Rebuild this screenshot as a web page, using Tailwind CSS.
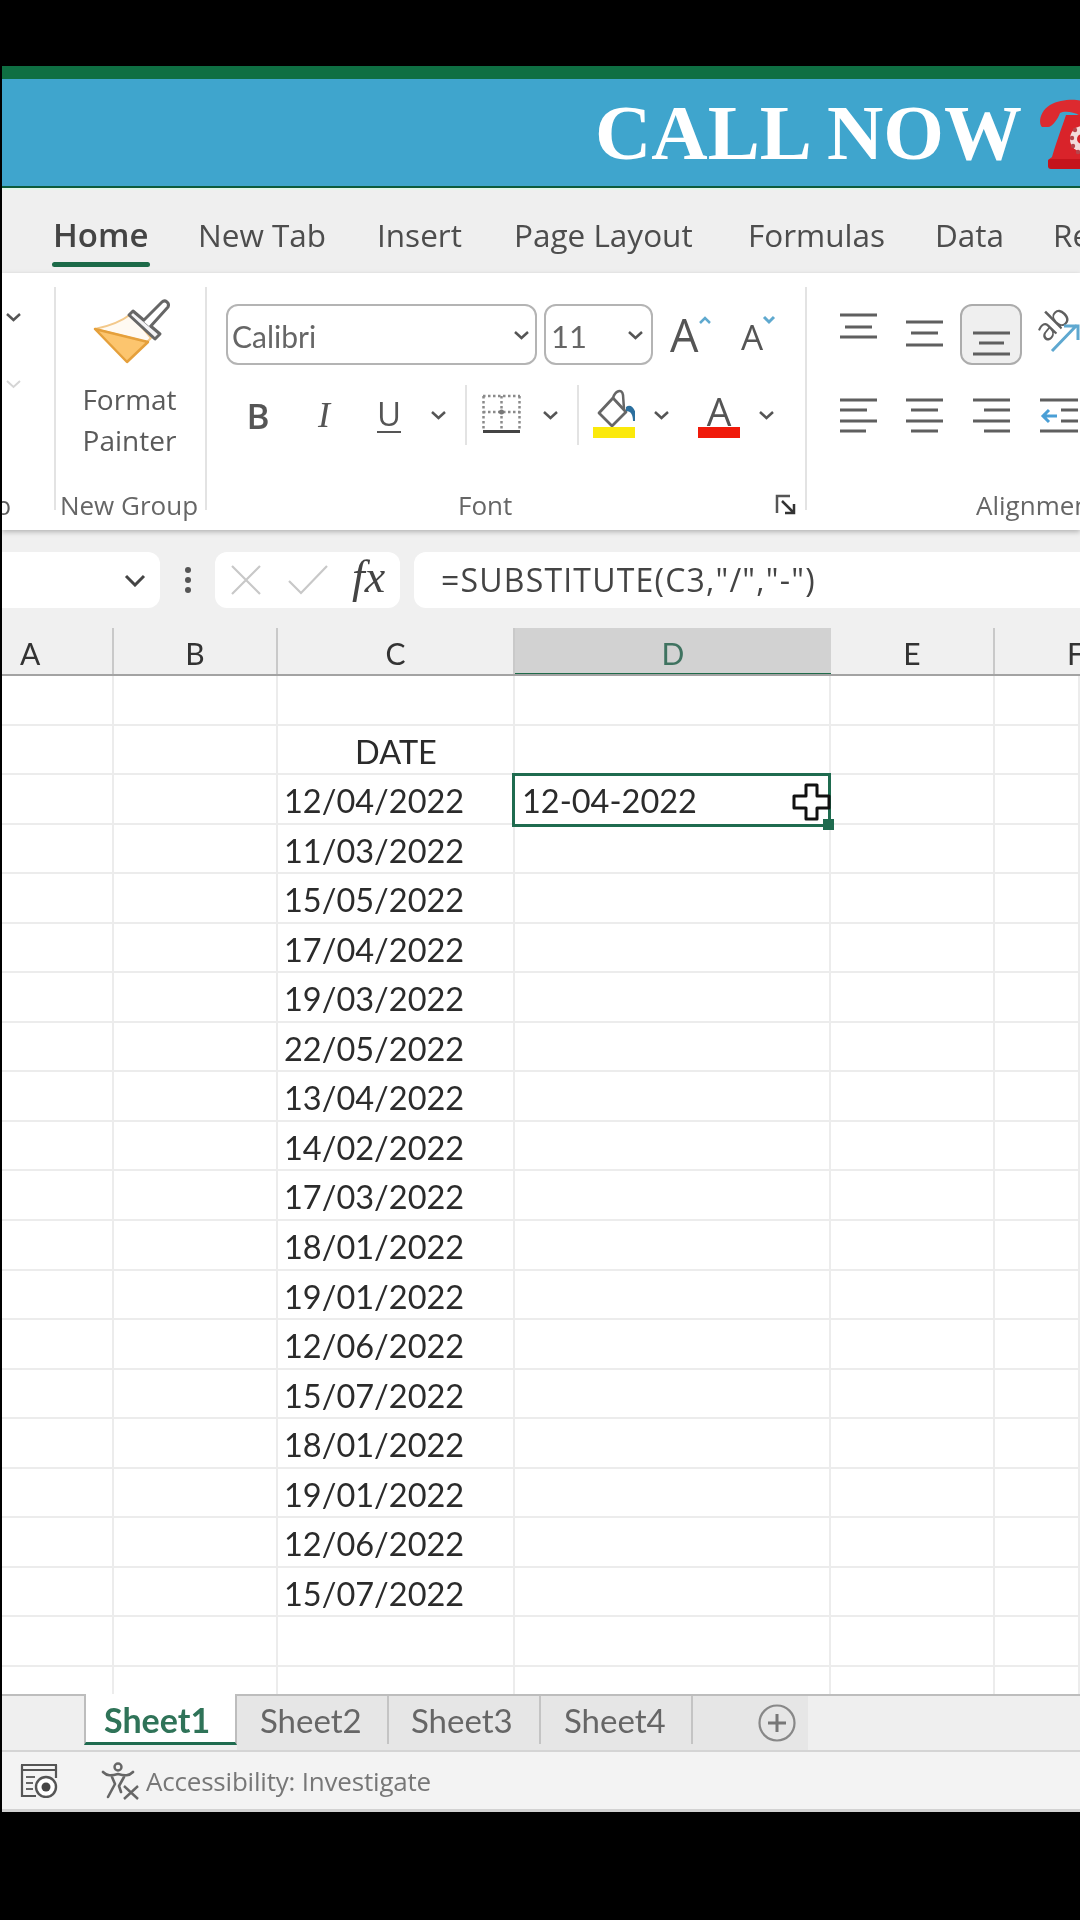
<!DOCTYPE html>
<html><head><meta charset="utf-8"><script src="https://cdn.jsdelivr.net/npm/@tailwindcss/browser@4"></script></head>
<body class="bg-black">
<div class="w-[1080px] h-[1920px] bg-black overflow-hidden pt-[66px] pl-[2px] blur-[0.6px] font-['Open_Sans',sans-serif]">
<div class="w-[1078px] flex flex-col overflow-hidden">

<!-- title strip + banner -->
<div class="h-[13px] bg-[#0f6f43]"></div>
<div class="h-[109px] bg-[#3fa5cd] border-b-2 border-[#0c5c3c] flex items-center pl-[593px] overflow-hidden">
  <span class="font-['Liberation_Serif',serif] font-bold text-[78px] leading-none text-white whitespace-nowrap w-[425px] shrink-0">CALL NOW</span>
  <svg class="shrink-0 -mt-[1px]" width="60" height="90" viewBox="0 0 60 90"><path d="M22 40C18 36 20 24 30 18C40 12 56 12 62 14V30C54 24 44 24 40 26C38 32 32 40 28 40Z" fill="#dd2a2f"/><path d="M46 28C42 40 36 56 32 70L28 73C28 78 29 81 32 82H64V28Z" fill="#d9232a"/><rect x="28" y="72" width="36" height="10" rx="3" fill="#c5141c"/><circle cx="63" cy="52" r="13" fill="#f3dcdc"/><circle cx="62" cy="52" r="5" fill="#d9232a"/><g fill="#b5454c"><circle cx="55" cy="43" r="2.2"/><circle cx="52" cy="51" r="2.2"/><circle cx="53" cy="59" r="2.2"/><circle cx="58" cy="65" r="2.2"/></g></svg>
</div>

<!-- ribbon tabs -->
<div class="h-[85px] bg-[#efefef] border-t-2 border-[#e4f6ec] flex text-[#4d4d4d] text-[31.5px] leading-none pl-[51px] pt-[29px] whitespace-nowrap">
  <div class="w-[145px] shrink-0 relative"><span class="font-semibold text-[33px] text-[#444] -mt-[1px] block">Home</span><div class="absolute left-[-1px] top-[43px] w-[98px] h-[5px] rounded-sm bg-[#1c6a48]"></div></div>
  <div class="w-[179px] shrink-0">New Tab</div>
  <div class="w-[137px] shrink-0">Insert</div>
  <div class="w-[234px] shrink-0">Page Layout</div>
  <div class="w-[187px] shrink-0">Formulas</div>
  <div class="w-[118px] shrink-0">Data</div>
  <div class="shrink-0">Review</div>
</div>

<!-- ribbon -->
<div class="h-[257px] bg-white pt-[14px] flex relative z-10 shadow-[0_2px_5px_rgba(0,0,0,0.25)] text-[#5c5c5c]">
  <!-- clipped group -->
  <div class="w-[52px] shrink-0 h-[223px] flex flex-col pl-[3px] overflow-visible">
    <svg class="mt-[25px]" width="17" height="10" viewBox="0 0 17 10"><path d="M2 2L8.5 8L15 2" fill="none" stroke="#555" stroke-width="2.5"/></svg>
    <svg class="mt-[57px]" width="17" height="10" viewBox="0 0 17 10"><path d="M2 2L8.5 8L15 2" fill="none" stroke="#d5d5d5" stroke-width="2"/></svg>
    <div class="mt-auto -mb-[10px] -ml-[9px] text-[25px] leading-[30px] h-[30px]">o</div>
  </div>
  <!-- format painter group -->
  <div class="w-[151px] shrink-0 h-[223px] border-l-2 border-[#e3e3e3] flex flex-col items-center">
    <svg class="ml-[8px] mt-[3px] shrink-0" width="110" height="90" viewBox="0 0 110 90"><path d="M15 39C30 36 42 31 51 24L71 48L67 52Z" fill="#fffaf2" stroke="#f3c98b" stroke-width="2" stroke-linejoin="round"/><path d="M15 39L68 52L47 72Z" fill="#fcc56e" stroke="#e5a03b" stroke-width="2.5" stroke-linejoin="round"/><path d="M49 25L53 21L80 44L75 49Z" fill="#f4f4f6" stroke="#666" stroke-width="3" stroke-linejoin="round"/><path d="M63 31L82 12C85 9 90 13 88 17L70 37" fill="#fff" stroke="#666" stroke-width="3" stroke-linejoin="round"/></svg>
    <div class="text-[28px] leading-[41px] text-center -mt-[1px] -ml-[2px] text-[#5a5a5a]">Format<br>Painter</div>
    <div class="mt-auto -mb-[10px] text-[26px] leading-[30px] h-[30px] whitespace-nowrap text-[#666] -ml-[3px]">New Group</div>
  </div>
  <!-- font group -->
  <div class="w-[600px] shrink-0 h-[223px] border-l-2 border-[#e3e3e3] flex flex-col">
    <div class="flex mt-[17px] ml-[19px] h-[61px] shrink-0">
      <div class="w-[311px] rounded-xl border-2 border-[#b4b4b4] flex items-center justify-between pl-[4px] pr-[5px] font-['Lato',sans-serif] text-[30px] text-[#666]"><span class="pt-[3px]">Calibri</span><svg width="17" height="10" viewBox="0 0 17 10"><path d="M2 2L8.5 8L15 2" fill="none" stroke="#555" stroke-width="2.5"/></svg></div>
      <div class="w-[109px] ml-[7px] rounded-xl border-2 border-[#b4b4b4] flex items-center justify-between pl-[5px] pr-[7px] font-['Lato',sans-serif] text-[31px] text-[#666]"><span class="pt-[3px]">11</span><svg width="17" height="10" viewBox="0 0 17 10"><path d="M2 2L8.5 8L15 2" fill="none" stroke="#555" stroke-width="2.5"/></svg></div>
      <div class="ml-[17px] w-[40px] flex h-[61px] relative shrink-0"><span class="text-[45px] leading-[61px] text-[#555]">A</span><svg class="absolute left-[28px] top-[11px]" width="14" height="10" viewBox="0 0 14 10"><path d="M2 8L7 3L12 8" fill="none" stroke="#5fa9cf" stroke-width="2.5"/></svg></div>
      <div class="ml-[31px] w-[40px] flex h-[61px] relative shrink-0"><span class="text-[35px] leading-[66px] text-[#555]">A</span><svg class="absolute left-[21px] top-[11px]" width="14" height="10" viewBox="0 0 14 10"><path d="M2 2L7 7L12 2" fill="none" stroke="#5fa9cf" stroke-width="3"/></svg></div>
    </div>
    <div class="flex mt-[20px] ml-[31px] h-[60px] items-center shrink-0">
      <div class="w-[40px] text-center font-semibold text-[35px] leading-none text-[#555]">B</div>
      <div class="w-[40px] ml-[26px] text-center font-['Liberation_Serif',serif] italic text-[36px] leading-none text-[#555]">I</div>
      <div class="w-[40px] ml-[25px] flex flex-col items-center text-[33px] leading-none text-[#555]"><span>U</span><span class="w-[24px] h-[2px] bg-[#555] mt-[1px]"></span></div>
      <svg class="ml-[21px]" width="17" height="10" viewBox="0 0 17 10"><path d="M2 2L8.5 8L15 2" fill="none" stroke="#555" stroke-width="2.5"/></svg>
      <div class="w-[2px] h-[60px] bg-[#e3e3e3] ml-[18px]"></div>
      <svg class="ml-[15px]" width="39" height="44" viewBox="0 0 39 44"><g fill="none" stroke="#8a8a8a" stroke-width="2.5" stroke-dasharray="2.5 2.5"><path d="M1 3H38"/><path d="M1.5 3V36"/><path d="M37.5 3V36"/><path d="M19.5 3V36"/><path d="M1 19H38"/></g><circle cx="19.5" cy="19" r="2.5" fill="#777"/><path d="M1 38.5H38" stroke="#444" stroke-width="3"/></svg>
      <svg class="ml-[21px]" width="17" height="10" viewBox="0 0 17 10"><path d="M2 2L8.5 8L15 2" fill="none" stroke="#555" stroke-width="2.5"/></svg>
      <div class="w-[2px] h-[60px] bg-[#e3e3e3] ml-[18px]"></div>
      <svg class="ml-[14px]" width="42" height="60" viewBox="0 0 42 60"><path d="M6 28L20 13L33 27L19 41Z" fill="#fff" stroke="#666" stroke-width="2.8" stroke-linejoin="round"/><path d="M20 13C22 6 29 3 30 10L31 24" fill="none" stroke="#666" stroke-width="2.5"/><path d="M33 22C38 18 44 24 43 36L40 36C40 30 38 26 33 26Z" fill="#2b6f9e"/><rect x="0" y="42" width="42" height="11" fill="#fbe90b"/></svg>
      <svg class="ml-[18px]" width="17" height="10" viewBox="0 0 17 10"><path d="M2 2L8.5 8L15 2" fill="none" stroke="#555" stroke-width="2.5"/></svg>
      <div class="ml-[28px] w-[42px] flex flex-col items-center shrink-0 h-[60px]"><span class="mt-[12px] h-[28px] text-[39px] leading-[28px] text-[#555]">A</span><span class="mt-[2px] w-[42px] h-[11px] bg-[#f01a0a] shrink-0"></span></div>
      <svg class="ml-[18px]" width="17" height="10" viewBox="0 0 17 10"><path d="M2 2L8.5 8L15 2" fill="none" stroke="#555" stroke-width="2.5"/></svg>
    </div>
    <div class="mt-auto -mb-[10px] h-[30px] flex text-[26px] leading-[30px] text-[#666] pl-[251px] shrink-0">Font<svg class="ml-auto mr-[8px] mt-[4px]" width="22" height="22" viewBox="0 0 22 22"><path d="M15 2H2V19" fill="none" stroke="#555" stroke-width="2.5"/><path d="M7 7L18 18M19 10V19H10" fill="none" stroke="#333" stroke-width="2.5"/></svg></div>
  </div>
  <!-- alignment group -->
  <div class="flex-1 h-[223px] border-l-2 border-[#e3e3e3] flex flex-col pl-[33px] overflow-visible">
    <div class="flex mt-[17px] h-[61px] shrink-0">
      <svg width="37" height="61" viewBox="0 0 37 61"><path d="M0 11H37M5 23H32M0 33H37" stroke="#5f5f5f" stroke-width="3"/></svg>
      <svg class="ml-[29px]" width="37" height="61" viewBox="0 0 37 61"><path d="M0 18H37M5 29H32M0 41H37" stroke="#5f5f5f" stroke-width="3"/></svg>
      <div class="ml-[17px] w-[62px] h-[61px] rounded-xl border-2 border-[#acacac] bg-[#efefef] shrink-0"><svg class="ml-[11px]" width="37" height="57" viewBox="0 0 37 57"><path d="M0 27H37M6 37H31M0 48H37" stroke="#5f5f5f" stroke-width="3"/></svg></div>
      <div class="ml-[15px] w-[50px] h-[61px] relative shrink-0 overflow-hidden"><span class="absolute left-[-4px] top-[3px] -rotate-45 text-[31px] leading-[30px] text-[#5f5f5f]">ab</span><svg class="absolute left-0 top-0" width="50" height="61" viewBox="0 0 50 61"><path d="M15 47L40 21M27 22H41V36" fill="none" stroke="#5ea8d0" stroke-width="3"/></svg></div>
    </div>
    <div class="flex mt-[20px] h-[60px] shrink-0">
      <svg width="37" height="60" viewBox="0 0 37 60"><path d="M0 15H37M0 25H27M0 36H37M0 46H26" stroke="#5f5f5f" stroke-width="3"/></svg>
      <svg class="ml-[29px]" width="37" height="60" viewBox="0 0 37 60"><path d="M0 15H37M5 25H32M0 36H37M5 46H32" stroke="#5f5f5f" stroke-width="3"/></svg>
      <svg class="ml-[30px]" width="37" height="60" viewBox="0 0 37 60"><path d="M0 15H37M11 25H37M0 36H37M11 46H37" stroke="#5f5f5f" stroke-width="3"/></svg>
      <svg class="ml-[30px]" width="38" height="60" viewBox="0 0 38 60"><path d="M0 15H38M0 46H38M21 25H38M21 36H38" stroke="#5f5f5f" stroke-width="3"/><path d="M17 31H3M9 25L3 31L9 37" fill="none" stroke="#4a9fd6" stroke-width="3"/></svg>
    </div>
    <div class="mt-auto -mb-[10px] h-[30px] text-[26px] leading-[30px] text-[#666] pl-[136px] whitespace-nowrap shrink-0">Alignment</div>
  </div>
</div>

<!-- formula bar -->
<div class="h-[98px] bg-[#f0f0f0] pt-[22px] flex shrink-0">
  <div class="w-[158px] h-[56px] bg-white rounded-r-xl flex items-center justify-end pr-[14px]"><svg width="22" height="13" viewBox="0 0 22 13"><path d="M2 2L11 11L20 2" fill="none" stroke="#444" stroke-width="3"/></svg></div>
  <div class="w-[55px] h-[56px] flex flex-col items-center justify-center gap-[4px]"><span class="w-[6px] h-[6px] rounded-full bg-[#555]"></span><span class="w-[6px] h-[6px] rounded-full bg-[#555]"></span><span class="w-[6px] h-[6px] rounded-full bg-[#555]"></span></div>
  <div class="w-[185px] h-[56px] bg-white rounded-xl flex items-center pl-[15px]">
    <svg width="32" height="32" viewBox="0 0 32 32"><path d="M2 2L30 30M30 2L2 30" stroke="#c8c8c8" stroke-width="2.2"/></svg>
    <svg class="ml-[25px]" width="42" height="32" viewBox="0 0 42 32"><path d="M2 17L14 29L40 2" fill="none" stroke="#c8c8c8" stroke-width="2.2"/></svg>
    <span class="ml-[23px] font-['Liberation_Serif',serif] italic text-[46px] leading-none text-[#444] -mt-[6px]">fx</span>
  </div>
  <div class="flex-1 ml-[14px] h-[56px] bg-white rounded-l-xl flex items-center pl-[27px] text-[32px] tracking-[1.2px] text-[#444] whitespace-nowrap">=SUBSTITUTE(C3,"/","-")</div>
</div>

<!-- column headers -->
<div class="h-[48px] bg-[#f0f0f0] grid grid-cols-[112px_164px_237px_316px_164px_85px] border-b-2 border-[#a3a3a3] font-['Lato',sans-serif] text-[30px] text-[#333] leading-[50px] overflow-hidden">
  <div class="border-r-2 border-[#c9c9c9] pl-[18px]">A</div>
  <div class="border-r-2 border-[#c9c9c9] text-center">B</div>
  <div class="border-r-2 border-[#c9c9c9] text-center">C</div>
  <div class="bg-[#d2d2d2] text-center text-[#3f7360] border-b-[3px] border-[#1f6b4a] h-[48px] relative z-10">D</div>
  <div class="border-r-2 border-[#c9c9c9] text-center">E</div>
  <div class="pl-[72px]">F</div>
</div>

<!-- grid -->
<div class="h-[1018px] bg-white overflow-hidden font-['Lato',sans-serif] text-[32.5px] text-[#2b2b2b] leading-[52px]">
  <div class="grid grid-cols-[112px_164px_237px_316px_164px_85px] h-[49.55px] border-b-2 border-[#ececec] *:border-r-2 *:border-[#ececec] *:pl-[6px]"><div></div><div></div><div></div><div></div><div></div><div></div></div>
  <div class="grid grid-cols-[112px_164px_237px_316px_164px_85px] h-[49.55px] border-b-2 border-[#ececec] *:border-r-2 *:border-[#ececec] *:pl-[6px]"><div></div><div></div><div class="text-center pr-[5px]">DATE</div><div></div><div></div><div></div></div>
  <div class="grid grid-cols-[112px_164px_237px_316px_164px_85px] h-[49.55px] border-b-2 border-[#ececec] *:border-r-2 *:border-[#ececec] *:pl-[6px]"><div></div><div></div><div>12/04/2022</div><div class="relative"><div class="absolute left-[-3px] top-[-2px] w-[319px] h-[54px] border-[3px] border-[#1f6b4f] bg-white pl-[7px] leading-[50px] z-10">12-04-2022<svg class="absolute left-[277px] top-[7px]" width="40" height="38" viewBox="0 0 40 38"><path d="M14 2H25V13H37V25H25V36H14V25H2V13H14Z" fill="#fff" stroke="#111" stroke-width="3" stroke-linejoin="round"/></svg><span class="absolute left-[308px] top-[43px] w-[11px] h-[11px] bg-[#1f6b4f]"></span></div></div><div></div><div></div></div>
  <div class="grid grid-cols-[112px_164px_237px_316px_164px_85px] h-[49.55px] border-b-2 border-[#ececec] *:border-r-2 *:border-[#ececec] *:pl-[6px]"><div></div><div></div><div>11/03/2022</div><div></div><div></div><div></div></div>
  <div class="grid grid-cols-[112px_164px_237px_316px_164px_85px] h-[49.55px] border-b-2 border-[#ececec] *:border-r-2 *:border-[#ececec] *:pl-[6px]"><div></div><div></div><div>15/05/2022</div><div></div><div></div><div></div></div>
  <div class="grid grid-cols-[112px_164px_237px_316px_164px_85px] h-[49.55px] border-b-2 border-[#ececec] *:border-r-2 *:border-[#ececec] *:pl-[6px]"><div></div><div></div><div>17/04/2022</div><div></div><div></div><div></div></div>
  <div class="grid grid-cols-[112px_164px_237px_316px_164px_85px] h-[49.55px] border-b-2 border-[#ececec] *:border-r-2 *:border-[#ececec] *:pl-[6px]"><div></div><div></div><div>19/03/2022</div><div></div><div></div><div></div></div>
  <div class="grid grid-cols-[112px_164px_237px_316px_164px_85px] h-[49.55px] border-b-2 border-[#ececec] *:border-r-2 *:border-[#ececec] *:pl-[6px]"><div></div><div></div><div>22/05/2022</div><div></div><div></div><div></div></div>
  <div class="grid grid-cols-[112px_164px_237px_316px_164px_85px] h-[49.55px] border-b-2 border-[#ececec] *:border-r-2 *:border-[#ececec] *:pl-[6px]"><div></div><div></div><div>13/04/2022</div><div></div><div></div><div></div></div>
  <div class="grid grid-cols-[112px_164px_237px_316px_164px_85px] h-[49.55px] border-b-2 border-[#ececec] *:border-r-2 *:border-[#ececec] *:pl-[6px]"><div></div><div></div><div>14/02/2022</div><div></div><div></div><div></div></div>
  <div class="grid grid-cols-[112px_164px_237px_316px_164px_85px] h-[49.55px] border-b-2 border-[#ececec] *:border-r-2 *:border-[#ececec] *:pl-[6px]"><div></div><div></div><div>17/03/2022</div><div></div><div></div><div></div></div>
  <div class="grid grid-cols-[112px_164px_237px_316px_164px_85px] h-[49.55px] border-b-2 border-[#ececec] *:border-r-2 *:border-[#ececec] *:pl-[6px]"><div></div><div></div><div>18/01/2022</div><div></div><div></div><div></div></div>
  <div class="grid grid-cols-[112px_164px_237px_316px_164px_85px] h-[49.55px] border-b-2 border-[#ececec] *:border-r-2 *:border-[#ececec] *:pl-[6px]"><div></div><div></div><div>19/01/2022</div><div></div><div></div><div></div></div>
  <div class="grid grid-cols-[112px_164px_237px_316px_164px_85px] h-[49.55px] border-b-2 border-[#ececec] *:border-r-2 *:border-[#ececec] *:pl-[6px]"><div></div><div></div><div>12/06/2022</div><div></div><div></div><div></div></div>
  <div class="grid grid-cols-[112px_164px_237px_316px_164px_85px] h-[49.55px] border-b-2 border-[#ececec] *:border-r-2 *:border-[#ececec] *:pl-[6px]"><div></div><div></div><div>15/07/2022</div><div></div><div></div><div></div></div>
  <div class="grid grid-cols-[112px_164px_237px_316px_164px_85px] h-[49.55px] border-b-2 border-[#ececec] *:border-r-2 *:border-[#ececec] *:pl-[6px]"><div></div><div></div><div>18/01/2022</div><div></div><div></div><div></div></div>
  <div class="grid grid-cols-[112px_164px_237px_316px_164px_85px] h-[49.55px] border-b-2 border-[#ececec] *:border-r-2 *:border-[#ececec] *:pl-[6px]"><div></div><div></div><div>19/01/2022</div><div></div><div></div><div></div></div>
  <div class="grid grid-cols-[112px_164px_237px_316px_164px_85px] h-[49.55px] border-b-2 border-[#ececec] *:border-r-2 *:border-[#ececec] *:pl-[6px]"><div></div><div></div><div>12/06/2022</div><div></div><div></div><div></div></div>
  <div class="grid grid-cols-[112px_164px_237px_316px_164px_85px] h-[49.55px] border-b-2 border-[#ececec] *:border-r-2 *:border-[#ececec] *:pl-[6px]"><div></div><div></div><div>15/07/2022</div><div></div><div></div><div></div></div>
  <div class="grid grid-cols-[112px_164px_237px_316px_164px_85px] h-[49.55px] border-b-2 border-[#ececec] *:border-r-2 *:border-[#ececec] *:pl-[6px]"><div></div><div></div><div></div><div></div><div></div><div></div></div>
  <div class="grid grid-cols-[112px_164px_237px_316px_164px_85px] h-[49.55px] *:border-r-2 *:border-[#ececec] *:pl-[6px]"><div></div><div></div><div></div><div></div><div></div><div></div></div>
</div>

<!-- sheet tabs -->
<div class="h-[58px] bg-[#efefef] flex shrink-0 border-b-2 border-[#d4d4d4] text-[31px] leading-none font-['Lato',sans-serif]">
  <div class="w-[82px] border-t-2 border-[#bdbdbd]"></div>
  <div class="w-[153px] h-[51px] bg-white border-x-2 border-[#bdbdbd] border-b-[3px] border-b-[#1f6b4f] pt-[9px] pl-[18px] font-bold text-[#2f7358] text-[34px] whitespace-nowrap">Sheet1</div>
  <div class="w-[571px] h-[56px] flex bg-[#e6e6e6] border-t-2 border-[#bdbdbd] text-[#666] text-[33px]">
    <div class="w-[152px] h-[48px] flex items-center pl-[23px] border-r-2 border-[#c4c4c4]">Sheet2</div>
    <div class="w-[152px] h-[48px] flex items-center pl-[22px] border-r-2 border-[#c4c4c4]">Sheet3</div>
    <div class="w-[152px] h-[48px] flex items-center pl-[23px] border-r-2 border-[#c4c4c4]">Sheet4</div>
    <svg class="ml-[65px] mt-[8px]" width="38" height="38" viewBox="0 0 38 38"><circle cx="19" cy="19" r="17.5" fill="none" stroke="#888" stroke-width="2.2"/><path d="M19 10V28M10 19H28" stroke="#777" stroke-width="3"/></svg>
  </div>
  <div class="flex-1 border-t-2 border-[#bdbdbd]"></div>
</div>

<!-- status bar -->
<div class="h-[60px] bg-[#f3f3f3] border-b-[3px] border-[#d2d2d2] flex items-center pl-[18px] shrink-0">
  <svg width="38" height="34" viewBox="0 0 38 34"><path d="M1 1H37M1 6H37" stroke="#555" stroke-width="2.2"/><path d="M2 1V32H16M36 1V14" fill="none" stroke="#555" stroke-width="2.2"/><path d="M6 13H15M6 19H13M6 25H13" stroke="#666" stroke-width="2.2"/><circle cx="26" cy="23" r="10" fill="#fff" stroke="#555" stroke-width="2.4"/><circle cx="26" cy="23" r="4.5" fill="#444"/></svg>
  <svg class="ml-[43px]" width="38" height="38" viewBox="0 0 38 38"><circle cx="17" cy="5" r="3.5" fill="none" stroke="#666" stroke-width="2.4"/><path d="M2 10C6 14 10 14 17 12C24 14 28 14 32 10M11 15L14 22L7 35M23 15L18 24L20 30" fill="none" stroke="#666" stroke-width="2.6" stroke-linecap="round" stroke-linejoin="round"/><path d="M23 24L37 37M37 24L23 37" stroke="#666" stroke-width="2.4"/></svg>
  <span class="ml-[7px] text-[26px] leading-none text-[#777] tracking-[-0.2px] whitespace-nowrap">Accessibility: Investigate</span>
</div>

</div>
</div>
</body></html>
